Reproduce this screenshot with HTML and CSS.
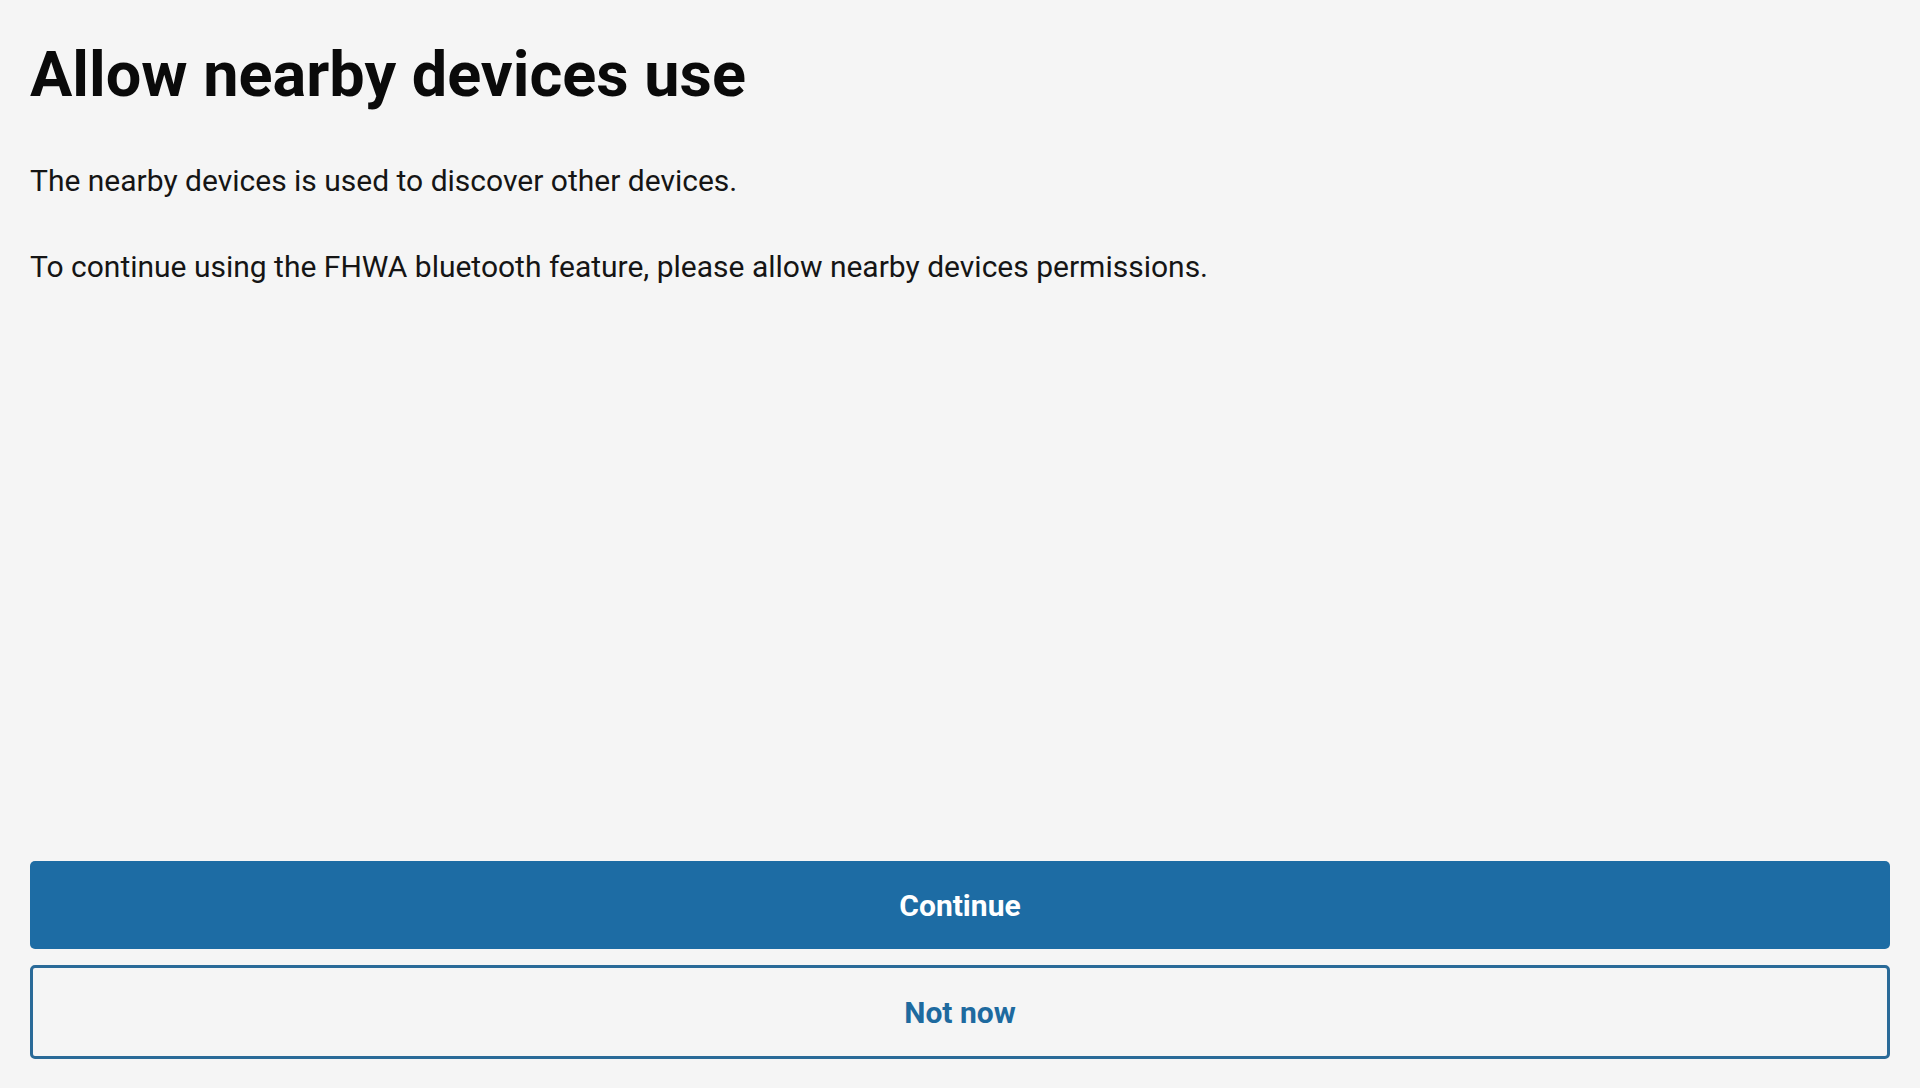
FILE: index.html
```html
<!DOCTYPE html>
<html lang="en">
<head>
<meta charset="utf-8">
<title>Allow nearby devices use</title>
<link rel="stylesheet" href="styles.css">
</head>
<body>
<main class="page">
  <section class="content">
    <h1 class="title">Allow nearby devices use</h1>
    <p class="text">The nearby devices is used to discover other devices.</p>
    <p class="text">To continue using the FHWA bluetooth feature, please allow nearby devices permissions.</p>
  </section>
  <div class="actions">
    <button class="btn btn-primary">Continue</button>
    <button class="btn btn-outline">Not now</button>
  </div>
</main>
</body>
</html>
```

FILE: styles.css
```css
html, body {
  margin: 0;
  padding: 0;
  background: #f5f5f5;
}
body {
  font-family: Roboto, "Liberation Sans", sans-serif;
  color: #111;
}
.page {
  box-sizing: border-box;
  height: 100vh;
  display: flex;
  flex-direction: column;
  padding: 37px 30px 29px 30px;
}
.content {
  flex: 1;
}
.title {
  margin: 0 0 48px 0;
  font-size: 63px;
  line-height: 76px;
  font-weight: 700;
  color: #0a0a0a;
}
.text {
  margin: 0 0 46px 0;
  font-size: 30px;
  line-height: 40px;
  font-weight: 400;
  color: #151515;
}
.actions {
  display: flex;
  flex-direction: column;
  gap: 16px;
}
.btn {
  box-sizing: border-box;
  width: 100%;
  border-radius: 5px;
  font-family: Roboto, "Liberation Sans", sans-serif;
  font-size: 30px;
  font-weight: 700;
  cursor: pointer;
}
.btn-primary {
  height: 88px;
  padding-top: 2px;
  background: #1d6ca4;
  color: #ffffff;
  border: none;
}
.btn-outline {
  height: 94px;
  background: #f5f5f5;
  color: #1e6a9f;
  border: 3px solid #2a6a98;
}
```
